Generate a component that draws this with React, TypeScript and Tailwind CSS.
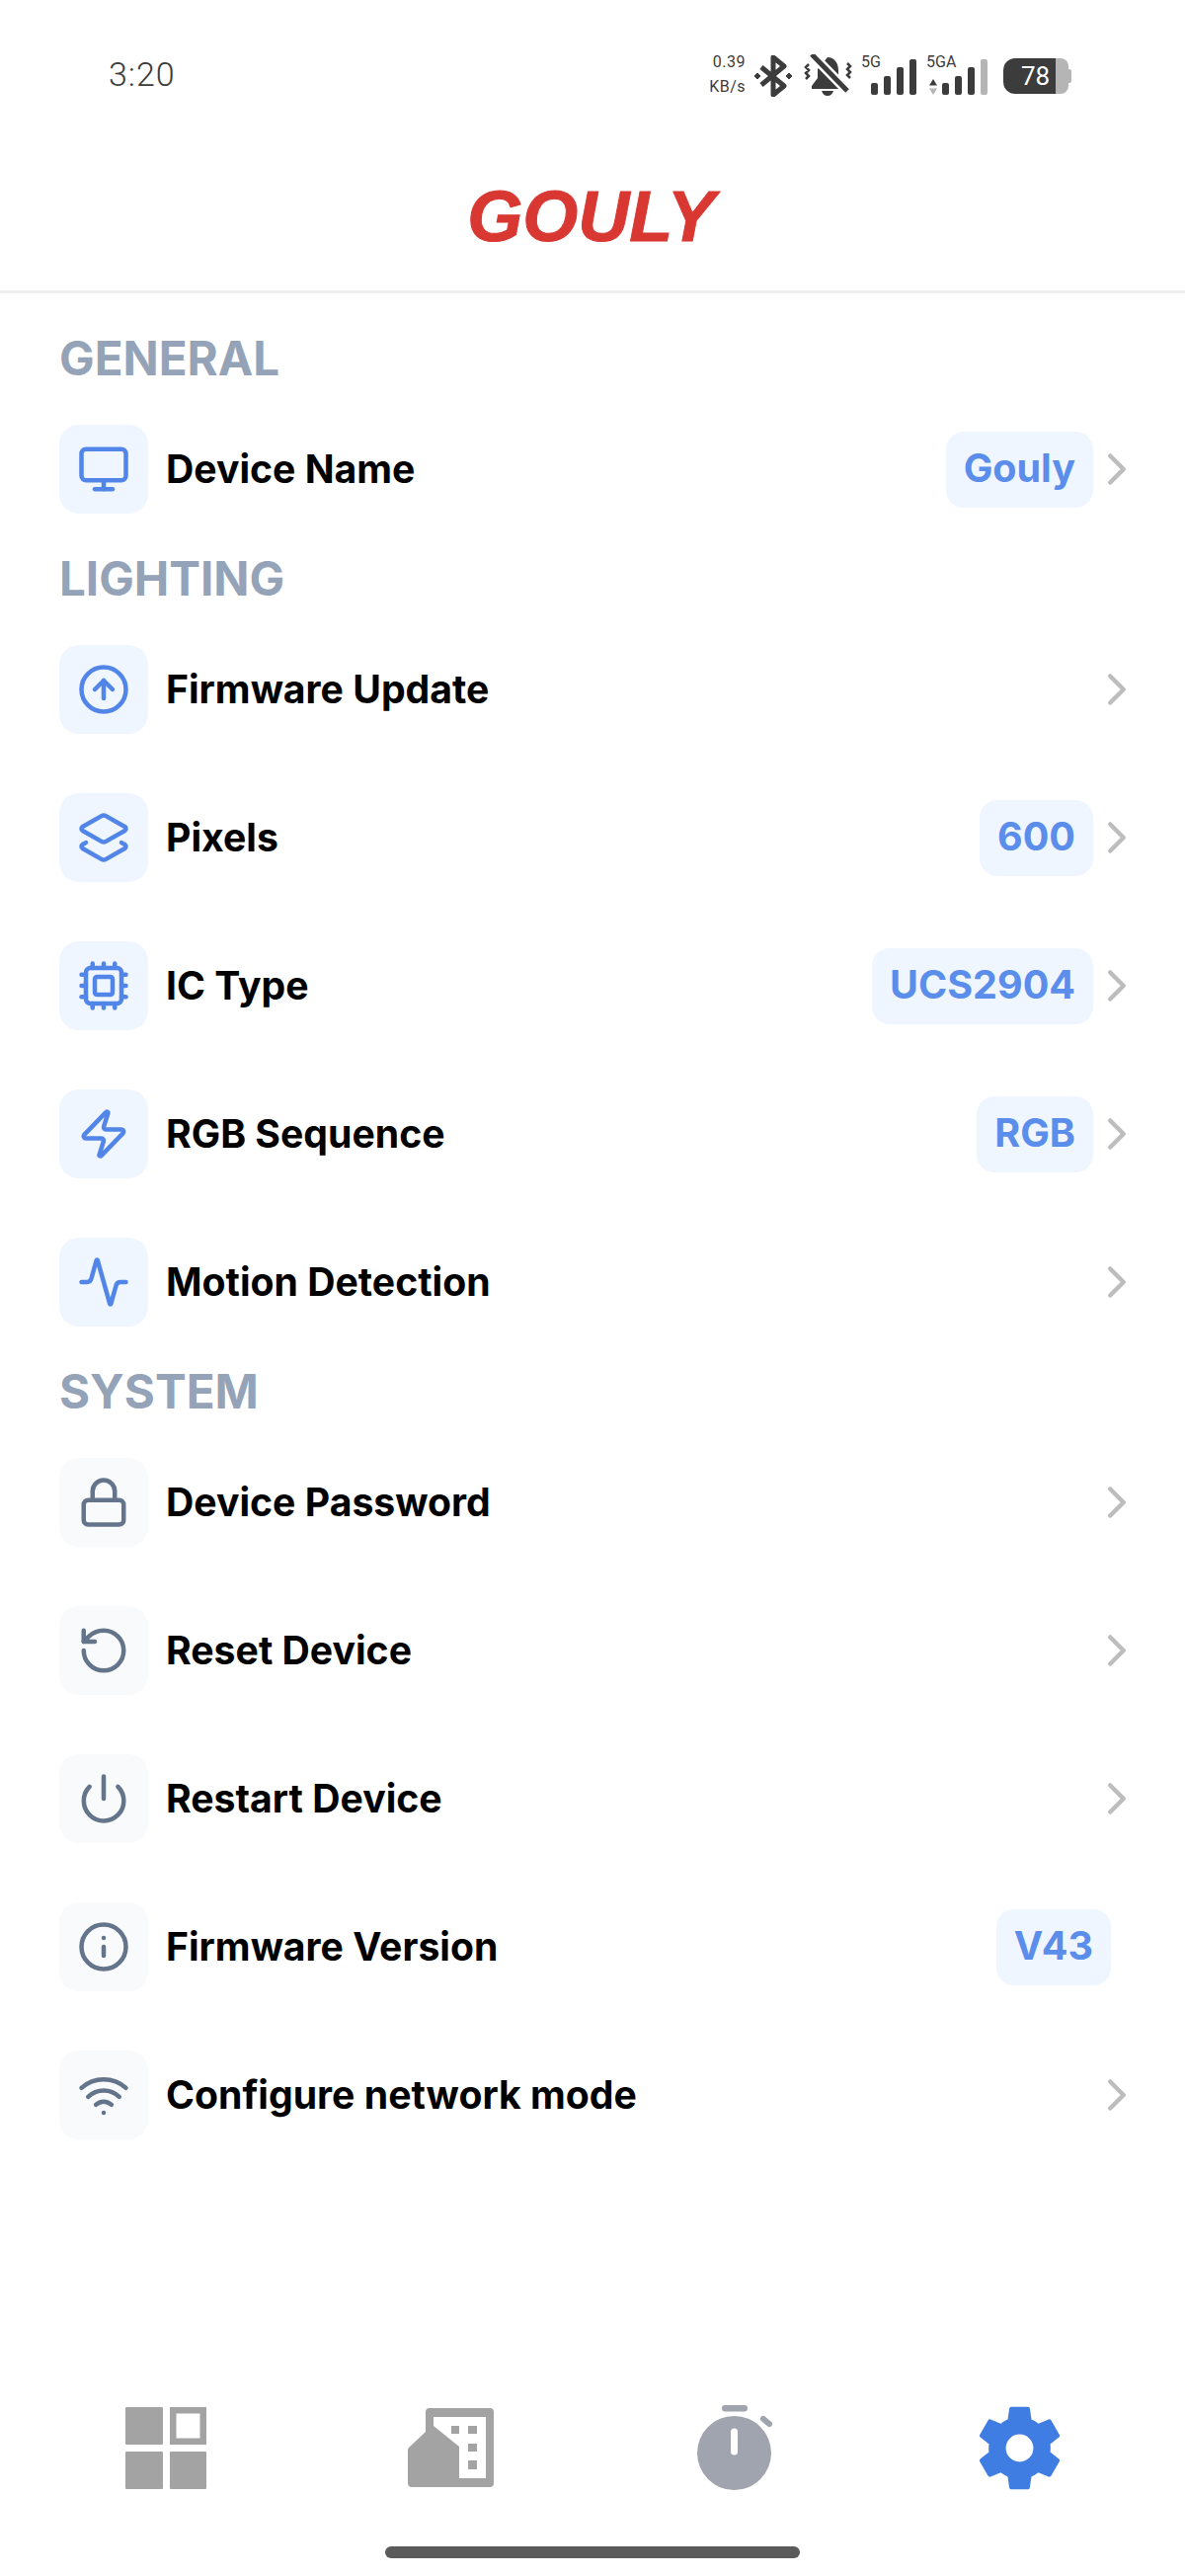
import { ReactNode } from "react";
import {
  Activity,
  ChevronRight,
  CircleArrowUp,
  Cpu,
  Info,
  Layers2,
  Lock,
  Monitor,
  Power,
  RotateCcw,
  Wifi,
  Zap,
} from "lucide-react";

const ICON = 54;

function GridNav() {
  return (
    <svg width="82" height="83" viewBox="0 0 82 83" fill="#a3a3a3">
      <rect width="38" height="38" rx="1" />
      <path fillRule="evenodd" d="M45 0h37v38H45zM51.500 6.500v25h24v-25z" />
      <rect y="45" width="38" height="38" rx="1" />
      <rect x="45" y="45" width="37" height="38" rx="1" />
    </svg>
  );
}

function BuildingNav() {
  return (
    <svg width="87" height="80" viewBox="0 0 87 80" fill="#a3a3a3">
      <path
        fillRule="evenodd"
        d="M18 4a4 4 0 0 1 4-4h61a4 4 0 0 1 4 4v72a4 4 0 0 1-4 4H4a4 4 0 0 1-4-4V42a3 3 0 0 1 1-2l17-16zM26 9v9l26 21v32h27V9z"
      />
      <path d="M44 18h8v8h-8zM61 18h9v8h-9zM61 36h9v8h-9zM61 53h9v9h-9z" />
    </svg>
  );
}

function TimerNav() {
  return (
    <svg width="76" height="86" viewBox="0 0 76 86" fill="#a0a4ae">
      <rect x="25" width="26" height="6.500" rx="3.250" />
      <path d="M67 14l6 5" stroke="#a0a4ae" strokeWidth="6" strokeLinecap="round" />
      <path
        fillRule="evenodd"
        d="M37.500 11a37.500 37.500 0 1 1 0 75 37.500 37.500 0 0 1 0-75zM34 27v20a3.500 3.500 0 0 0 7 0V27a3.500 3.500 0 0 0-7 0z"
      />
    </svg>
  );
}

function GearNav() {
  return (
    <svg width="83" height="87" viewBox="2.500 2 19 20" fill="#3f7de3">
      <path d="M19.140 12.940c.040-.300.060-.610.060-.940 0-.320-.020-.640-.070-.940l2.030-1.580c.180-.140.230-.410.120-.610l-1.920-3.320c-.120-.220-.370-.290-.590-.220l-2.390.960c-.500-.380-1.030-.700-1.620-.940l-.360-2.540c-.040-.240-.240-.410-.480-.410h-3.840c-.240 0-.430.170-.470.410l-.360 2.540c-.590.240-1.130.570-1.620.940l-2.390-.960c-.220-.080-.470 0-.590.220L2.740 8.870c-.120.210-.080.470.120.610l2.030 1.580c-.050.300-.090.630-.090.940s.020.640.070.940l-2.030 1.580c-.180.140-.230.410-.120.610l1.920 3.320c.120.220.370.290.590.220l2.390-.960c.500.380 1.030.700 1.620.940l.360 2.540c.050.240.240.410.480.410h3.840c.240 0 .440-.170.470-.410l.360-2.540c.590-.240 1.130-.560 1.620-.940l2.390.960c.220.080.470 0 .590-.220l1.920-3.320c.120-.220.070-.470-.120-.610l-2.010-1.580z" />
      <circle cx="12" cy="12" r="3.200" fill="#fff" />
    </svg>
  );
}

function Bars({ dim }: { dim?: boolean }) {
  return (
    <svg width="46" height="36" viewBox="0 0 46 36">
      <rect x="0" y="24" width="7" height="12" rx="2" fill="#3c3c3c" />
      <rect x="13" y="17" width="7" height="19" rx="2" fill="#3c3c3c" />
      <rect x="26" y="8" width="7" height="28" rx="2" fill="#3c3c3c" />
      <rect x="39" y="0" width="7" height="36" rx="2" fill={dim ? "#b5b5b5" : "#3c3c3c"} />
    </svg>
  );
}

function StatusBar() {
  return (
    <div className="flex h-[92px] items-start justify-between pl-[110px] pr-[115px] pt-[55px] font-['Roboto',sans-serif] text-[#3c3c3c]">
      <span className="mt-[3px] text-[34px] font-light leading-[34px] tracking-[1px]">3:20</span>
      <div className="flex items-start">
        <div className="-mt-[5px] flex w-[35px] flex-col items-end text-[16px] leading-[25px] tracking-[0.5px]">
          <span>0.39</span>
          <span>KB/s</span>
        </div>
        {/* bluetooth */}
        <svg width="40" height="42" viewBox="0 0 40 42" fill="none" stroke="#3c3c3c" strokeWidth="5" strokeLinejoin="round" className="ml-[8px] mt-[1px]">
          <path d="M8 12l23 19-11 9V2l11 9L8 30" />
          <path d="M4 18l3 3-3 3-3-3zM36 18l3 3-3 3-3-3z" fill="#3c3c3c" strokeWidth="1" />
        </svg>
        {/* muted bell */}
        <svg width="49" height="42" viewBox="0 0 49 42" className="ml-[11px]">
          <path d="M24 3c7 0 11 6 11 13v9l5 7v3H8v-3l6-8v-9z" fill="#3c3c3c" />
          <path d="M18 37h12c-1 3-3 5-6 5s-5-2-6-5z" fill="#3c3c3c" />
          <path d="M8 0l36 37" stroke="#fff" strokeWidth="10" />
          <path d="M8 0l36 37" stroke="#3c3c3c" strokeWidth="5" />
          <path d="M5 10l-3 3 3 3-3 3 3 3-3 3M44 9l3 3-3 3 3 3-3 3 3 3" fill="none" stroke="#3c3c3c" strokeWidth="2.500" />
        </svg>
        <div className="relative ml-[9px] h-[41px] w-[56px]">
          <span className="absolute left-0 top-0 text-[16px] leading-[16px]">5G</span>
          <div className="absolute bottom-0 right-0 flex">
            <Bars />
          </div>
        </div>
        <div className="relative ml-[10px] h-[41px] w-[62px]">
          <span className="absolute left-0 top-0 text-[16px] leading-[16px]">5GA</span>
          <svg width="8" height="16" viewBox="0 0 8 16" className="absolute bottom-0 left-[3px]">
            <path d="M4 0l4 6.500H0z" fill="#3c3c3c" />
            <path d="M4 16l4-6.500H0z" fill="#b5b5b5" />
          </svg>
          <div className="absolute bottom-0 right-0 flex">
            <Bars dim />
          </div>
        </div>
        <div className="ml-[16px] mt-[4px] flex h-[36px] items-center">
          <div className="flex h-[36px] w-[53px] items-center justify-center rounded-l-[12px] bg-[#3c3c3c] pl-[12px] text-[26px] leading-none text-white">
            78
          </div>
          <div className="h-[36px] w-[13px] rounded-r-[8px] bg-[#b5b5b5]" />
          <div className="h-[14px] w-[3px] rounded-r-[2px] bg-[#b5b5b5]" />
        </div>
      </div>
    </div>
  );
}

function Heading({ children }: { children: ReactNode }) {
  return (
    <div className="flex h-[73px] items-center pb-[2px] text-[47.500px] font-bold leading-none text-[#94a3b8]">
      {children}
    </div>
  );
}

type RowProps = {
  icon: ReactNode;
  label: string;
  value?: string;
  chevron?: boolean;
  muted?: boolean;
};

function Row({ icon, label, value, chevron = true, muted }: RowProps) {
  return (
    <div className="flex h-[150px] items-center">
      <div
        className={
          muted
            ? "flex h-[90px] w-[90px] shrink-0 items-center justify-center rounded-[20px] bg-[#f8fafc] text-[#64748b]"
            : "flex h-[90px] w-[90px] shrink-0 items-center justify-center rounded-[20px] bg-[#eff6ff] text-[#5285e8]"
        }
      >
        {icon}
      </div>
      <span className="ml-[18px] flex-1 text-[39.200px] leading-none text-black [font-weight:650]">{label}</span>
      {value && (
        <span className="flex h-[77px] items-center rounded-[18px] bg-[#eff6ff] px-[18px] text-[39.500px] leading-none text-[#5b8dea] [font-weight:650]">
          {value}
        </span>
      )}
      {chevron ? (
        <ChevronRight size={ICON} className="-ml-[3px] shrink-0 text-[#bdbdbd]" />
      ) : (
        <div className="w-[33px] shrink-0" />
      )}
    </div>
  );
}

export default function App() {
  return (
    <div className="flex h-[2608px] w-[1200px] flex-col bg-white font-['Inter','Liberation_Sans',sans-serif]">
      <StatusBar />
      <header className="flex h-[205px] items-center justify-center border-b-[3px] border-[#eeeeee] pt-[52px]">
        <span className="-ml-[3px] font-['Liberation_Sans',sans-serif] text-[72px] font-bold italic leading-none text-[#d93832] [-webkit-text-stroke:1px_#d93832]">
          GOULY
        </span>
      </header>

      <main className="flex-1 pl-[60px] pr-[42px] pt-[30px]">
        <Heading>GENERAL</Heading>
        <Row icon={<Monitor size={ICON} />} label="Device Name" value="Gouly" />
        <Heading>LIGHTING</Heading>
        <Row icon={<CircleArrowUp size={ICON} />} label="Firmware Update" />
        <Row icon={<Layers2 size={ICON} />} label="Pixels" value="600" />
        <Row icon={<Cpu size={ICON} />} label="IC Type" value="UCS2904" />
        <Row icon={<Zap size={ICON} />} label="RGB Sequence" value="RGB" />
        <Row icon={<Activity size={ICON} />} label="Motion Detection" />
        <Heading>SYSTEM</Heading>
        <Row muted icon={<Lock size={ICON} />} label="Device Password" />
        <Row muted icon={<RotateCcw size={ICON} />} label="Reset Device" />
        <Row muted icon={<Power size={ICON} />} label="Restart Device" />
        <Row muted icon={<Info size={ICON} />} label="Firmware Version" value="V43" chevron={false} />
        <Row muted icon={<Wifi size={ICON} />} label="Configure network mode" />
      </main>

      <nav className="flex h-[175px] flex-col">
        <div className="grid h-[90px] grid-cols-4 items-center px-[24px]">
          <div className="flex justify-center"><GridNav /></div>
          <div className="flex justify-center"><BuildingNav /></div>
          <div className="flex justify-center"><TimerNav /></div>
          <div className="flex justify-center"><GearNav /></div>
        </div>
        <div className="mx-auto mt-[55px] h-[12px] w-[420px] rounded-full bg-[#5b5b5b]" />
      </nav>
    </div>
  );
}
